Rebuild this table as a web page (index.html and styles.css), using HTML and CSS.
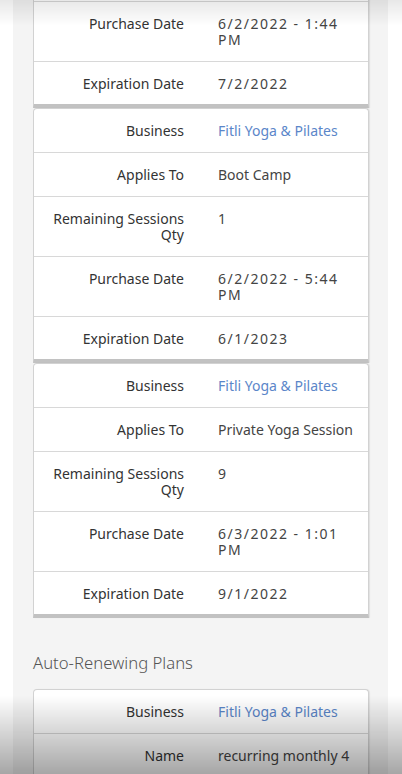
FILE: index.html
```html
<!DOCTYPE html>
<html lang="en">
<head>
  <meta charset="UTF-8">
  <meta name="viewport" content="width=device-width, initial-scale=1.0">
  <title>Passes</title>
  <link rel="stylesheet" href="styles.css">
</head>
<body>
  <div class="panel">
    <div class="card card-cut">
      <div class="row"><div class="lbl">Purchase Date</div><div class="val num">6/2/2022 - 1:44 PM</div></div>
      <div class="row"><div class="lbl">Expiration Date</div><div class="val num">7/2/2022</div></div>
    </div>

    <div class="card">
      <div class="row"><div class="lbl">Business</div><div class="val"><a href="#">Fitli Yoga &amp; Pilates</a></div></div>
      <div class="row"><div class="lbl">Applies To</div><div class="val">Boot Camp</div></div>
      <div class="row"><div class="lbl">Remaining Sessions Qty</div><div class="val num">1</div></div>
      <div class="row"><div class="lbl">Purchase Date</div><div class="val num">6/2/2022 - 5:44 PM</div></div>
      <div class="row"><div class="lbl">Expiration Date</div><div class="val num">6/1/2023</div></div>
    </div>

    <div class="card">
      <div class="row"><div class="lbl">Business</div><div class="val"><a href="#">Fitli Yoga &amp; Pilates</a></div></div>
      <div class="row"><div class="lbl">Applies To</div><div class="val">Private Yoga Session</div></div>
      <div class="row"><div class="lbl">Remaining Sessions Qty</div><div class="val num">9</div></div>
      <div class="row"><div class="lbl">Purchase Date</div><div class="val num">6/3/2022 - 1:01 PM</div></div>
      <div class="row"><div class="lbl">Expiration Date</div><div class="val num">9/1/2022</div></div>
    </div>

    <h2 class="section">Auto-Renewing Plans</h2>

    <div class="card">
      <div class="row"><div class="lbl">Business</div><div class="val"><a href="#">Fitli Yoga &amp; Pilates</a></div></div>
      <div class="row"><div class="lbl">Name</div><div class="val">recurring monthly 4</div></div>
    </div>
  </div>

  <div class="fade-top"></div>
  <div class="fade-bottom"></div>
</body>
</html>
```

FILE: styles.css
```css
body { margin: 0; background: #fff; font-family: "Noto Sans", sans-serif; font-size: 14px; color: #333; overflow: hidden; height: 774px; }
.panel { margin: 0 14px 0 13px; background: #f4f4f4; padding: 0 19px 0 20px; height: 774px; overflow: hidden; }
.card { background: #fff; border: 1px solid #d2d2d2; border-bottom: 4px solid #c2c2c2; border-radius: 4px 4px 0 0; box-shadow: 1px 0 1px rgba(0,0,0,0.08); }
.card-cut { border-top: 0; border-radius: 0; padding-top: 1px; }
.card-cut .row:first-child { border-top: 1px solid #d8d8d8; }
.row { display: flex; border-top: 1px solid #d8d8d8; }
.row:first-child { border-top: 0; }
.lbl, .val { width: 50%; box-sizing: border-box; padding: 14px 17px 13px 17px; line-height: 16px; }
.row:last-child .lbl, .row:last-child .val { padding-bottom: 12px; }
.lbl { text-align: right; color: #333; }
.val { color: #444; padding-right: 8px; }
.val.num { letter-spacing: 1.5px; padding-right: 17px; }
.val a { color: #5b86c9; text-decoration: none; }
.section { font-weight: 300; font-size: 16.7px; color: #555; margin: 34px 0 15px 0; line-height: 22px; }
.fade-top { position: fixed; left: 0; right: 0; top: 0; height: 26px; background: linear-gradient(rgba(0,0,0,0.09), rgba(0,0,0,0)); pointer-events: none; }
.fade-bottom { position: fixed; left: 0; right: 0; bottom: 0; height: 78px; background: linear-gradient(rgba(0,0,0,0), rgba(0,0,0,0.35)); pointer-events: none; }
```
